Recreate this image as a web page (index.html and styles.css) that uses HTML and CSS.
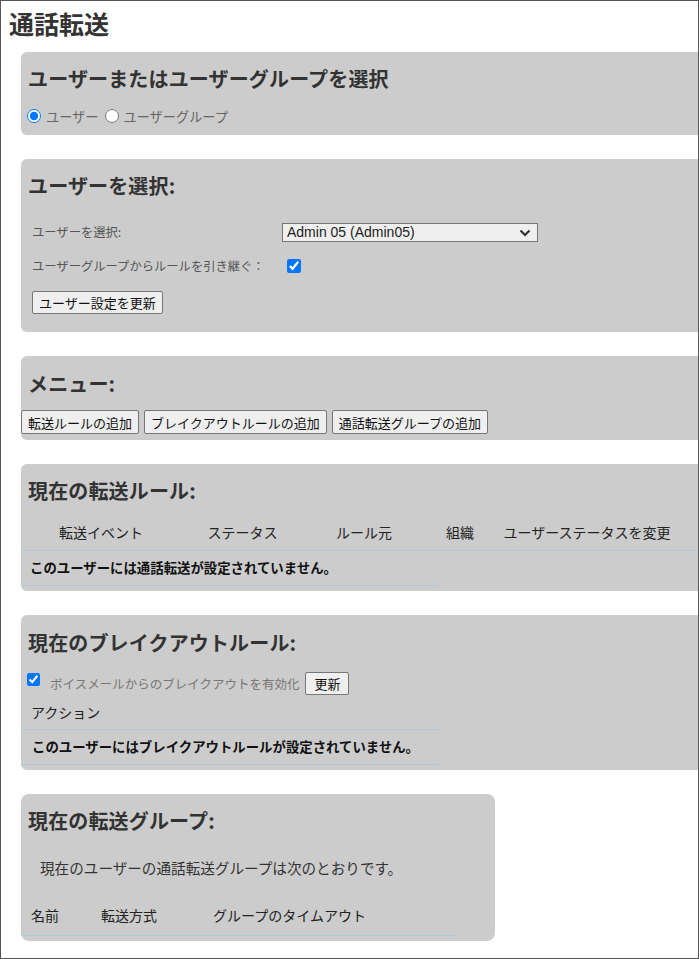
FILE: index.html
```html
<!DOCTYPE html>
<html lang="ja">
<head>
    <meta charset="UTF-8">
    <meta name="viewport" content="width=device-width, initial-scale=1.0">
    <title>通話転送</title>
    <link rel="stylesheet" href="styles.css">
</head>
<body>
    <div class="frame">
        <h1 class="page-title">通話転送</h1>

        <section class="panel panel-target">
            <h2>ユーザーまたはユーザーグループを選択</h2>
            <div class="radio-row">
                <label><input type="radio" name="target" checked>ユーザー</label>
                <label><input type="radio" name="target">ユーザーグループ</label>
            </div>
        </section>

        <section class="panel panel-user">
            <h2>ユーザーを選択:</h2>
            <div class="user-form">
                <div class="form-row">
                    <label for="userSelect">ユーザーを選択:</label>
                    <span class="select-wrap">
                        <select id="userSelect">
                            <option>Admin 05 (Admin05)</option>
                        </select>
                        <svg class="select-arrow" width="12" height="8" viewBox="0 0 12 8"><path d="M1.5 1.5 L6 6 L10.5 1.5" fill="none" stroke="#333" stroke-width="2.2"/></svg>
                    </span>
                </div>
                <div class="form-row">
                    <label for="inheritRules">ユーザーグループからルールを引き継ぐ：</label>
                    <input type="checkbox" id="inheritRules" checked>
                </div>
                <button class="btn btn-update">ユーザー設定を更新</button>
            </div>
        </section>

        <section class="panel panel-menu">
            <h2>メニュー:</h2>
            <div class="menu-buttons">
                <button class="btn">転送ルールの追加</button>
                <button class="btn">ブレイクアウトルールの追加</button>
                <button class="btn">通話転送グループの追加</button>
            </div>
        </section>

        <section class="panel panel-rules">
            <h2>現在の転送ルール:</h2>
            <div class="rules-head">
                <span>転送イベント</span>
                <span>ステータス</span>
                <span>ルール元</span>
                <span>組織</span>
                <span>ユーザーステータスを変更</span>
            </div>
            <div class="empty-row rules-empty">このユーザーには通話転送が設定されていません。</div>
        </section>

        <section class="panel panel-breakout">
            <h2>現在のブレイクアウトルール:</h2>
            <div class="breakout-row">
                <input type="checkbox" id="voicemailBreakout" checked>
                <label for="voicemailBreakout">ボイスメールからのブレイクアウトを有効化</label>
                <button class="btn btn-small">更新</button>
            </div>
            <div class="breakout-head">アクション</div>
            <div class="empty-row breakout-empty">このユーザーにはブレイクアウトルールが設定されていません。</div>
        </section>

        <section class="panel panel-groups">
            <h2>現在の転送グループ:</h2>
            <p class="groups-note">現在のユーザーの通話転送グループは次のとおりです。</p>
            <div class="groups-head">
                <span>名前</span>
                <span>転送方式</span>
                <span>グループのタイムアウト</span>
            </div>
        </section>
    </div>
</body>
</html>
```

FILE: styles.css
```css
* {
    box-sizing: border-box;
}
body {
    margin: 0;
    background-color: #fff;
    font-family: "Noto Sans CJK JP", "Noto Sans", sans-serif;
    color: #222;
}
.frame {
    width: 699px;
    height: 959px;
    border: 1px solid #555;
    overflow: hidden;
    padding: 7px 0 0 8px;
}
.page-title {
    margin: 0 0 14px;
    font-size: 25px;
    line-height: 30px;
    font-weight: bold;
    color: #333;
}
.panel {
    background-color: #ccc;
    border-radius: 6px;
    margin: 0 -40px 24px 12px;
    padding: 13px 7px 9px;
}
.panel h2 {
    margin: 0;
    font-size: 20px;
    line-height: 28px;
    font-weight: bold;
    color: #333;
    letter-spacing: 0.15px;
}

/* ユーザー / グループ */
.radio-row {
    display: flex;
    align-items: center;
    height: 20px;
    margin-top: 13px;
    font-size: 13.2px;
    color: #666;
}
.radio-row label {
    display: flex;
    align-items: center;
    margin-right: 7px;
}
.radio-row input {
    margin: 0 5px 0 -1px;
    width: 14px;
    height: 14px;
}

/* ユーザーを選択 */
.panel-user {
    padding-bottom: 18px;
}
.user-form {
    margin-top: 22px;
    padding-left: 4px;
}
.form-row {
    display: grid;
    grid-template-columns: 250px auto;
    align-items: center;
    justify-items: start;
    height: 20px;
    font-size: 12.3px;
    color: #555;
}
.form-row + .form-row {
    margin-top: 14px;
}
.select-wrap {
    position: relative;
    display: block;
    height: 19px;
}
.form-row select {
    appearance: none;
    width: 256px;
    height: 19px;
    padding: 0 2px 0 4px;
    border: 1px solid #767676;
    border-radius: 0;
    background-color: #efefef;
    font-family: "Liberation Sans", Arial, sans-serif;
    font-size: 14px;
    line-height: 17px;
    color: #222;
}
.select-arrow {
    position: absolute;
    right: 7px;
    top: 6px;
    pointer-events: none;
}
.form-row input[type="checkbox"] {
    margin: 0 0 0 5px;
    width: 14px;
    height: 14px;
}
.btn {
    height: 23px;
    padding: 0 6px;
    border: 1px solid #767676;
    border-radius: 2px;
    background-color: #efefef;
    font-family: "Noto Sans CJK JP", sans-serif;
    font-size: 13px;
    line-height: 21px;
    color: #111;
    cursor: pointer;
}
.btn:hover {
    background-color: #e5e5e5;
}
.btn-update {
    margin-top: 15px;
}

/* メニュー */
.panel-menu {
    padding: 14px 0 6px;
}
.panel-menu h2 {
    padding-left: 7px;
}
.menu-buttons {
    display: flex;
    gap: 5px;
    margin-top: 12px;
}
.menu-buttons .btn {
    height: 24px;
}

/* 転送ルール */
.panel-rules {
    padding: 13px 0 5px;
}
.panel-rules h2,
.panel-breakout h2,
.panel-groups h2 {
    padding-left: 7px;
}
.rules-head {
    display: grid;
    grid-template-columns: 160px 123px 120px 72px 182px;
    margin-top: 9px;
    padding: 8px 0;
    border-bottom: 1px solid #a8cbe0;
    font-size: 14px;
    line-height: 20px;
    text-align: center;
    color: #222;
}
.empty-row {
    padding: 6px 0 8px;
    border-bottom: 1px solid #a8cbe0;
    font-size: 13.4px;
    line-height: 20px;
    font-weight: bold;
    color: #111;
}
.rules-empty {
    width: 416px;
    padding-left: 9px;
}

/* ブレイクアウトルール */
.panel-breakout {
    padding: 14px 0 5px;
}
.breakout-row {
    display: flex;
    align-items: flex-start;
    margin-top: 15px;
}
.breakout-row input {
    margin: 1px 0 0 6px;
    width: 13px;
    height: 13px;
}
.breakout-row label {
    margin-left: 10px;
    font-size: 12.5px;
    line-height: 23px;
    color: #777;
}
.btn-small {
    margin-left: 6px;
    padding: 0 8px;
}
.breakout-head {
    width: 418px;
    padding: 7px 10px;
    border-bottom: 1px solid #a8cbe0;
    font-size: 14px;
    line-height: 20px;
    color: #222;
}
.breakout-empty {
    width: 418px;
    padding-left: 11px;
}

/* 転送グループ */
.panel-groups {
    width: 474px;
    margin-right: 0;
    margin-bottom: 0;
    padding: 13px 0 5px;
    border-radius: 8px;
}
.groups-note {
    margin: 23px 0 0;
    padding-left: 19px;
    font-size: 14.6px;
    line-height: 20px;
    color: #333;
}
.groups-head {
    display: grid;
    grid-template-columns: 70px 112px auto;
    width: 437px;
    margin-top: 27px;
    padding-bottom: 10px;
    border-bottom: 1px solid #a8cbe0;
    font-size: 14px;
    line-height: 20px;
    color: #222;
}
.groups-head span {
    padding-left: 10px;
}
```
